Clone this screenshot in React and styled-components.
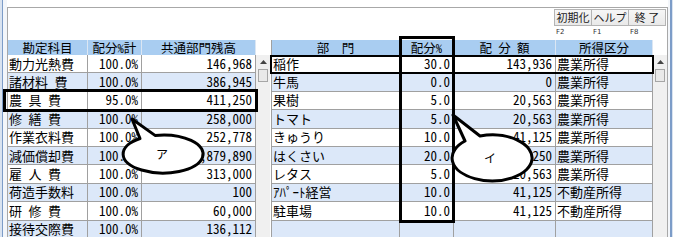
import React from 'react'
import styled, { createGlobalStyle } from 'styled-components'

const GlobalStyle = createGlobalStyle`
  html, body { margin: 0; padding: 0; background: #fff; }
  body { font-family: "Noto Sans CJK JP", "Noto Sans", sans-serif; color: #000; }
`

const leftRows = [
  ['動力光熱費', '100.0%', '146,968'],
  ['諸材料　費', '100.0%', '386,945'],
  ['農　具　費', '95.0%', '411,250'],
  ['修　繕　費', '100.0%', '258,000'],
  ['作業衣料費', '100.0%', '252,778'],
  ['減価償却費', '100.0%', '1,879,890'],
  ['雇　人　費', '100.0%', '313,000'],
  ['荷造手数料', '100.0%', '100'],
  ['研　修　費', '100.0%', '60,000'],
  ['接待交際費', '100.0%', '136,112'],
]

const rightRows = [
  ['稲作', '30.0', '143,936', '農業所得'],
  ['牛馬', '0.0', '0', '農業所得'],
  ['果樹', '5.0', '20,563', '農業所得'],
  ['トマト', '5.0', '20,563', '農業所得'],
  ['きゅうり', '10.0', '41,125', '農業所得'],
  ['はくさい', '20.0', '82,250', '農業所得'],
  ['レタス', '5.0', '20,563', '農業所得'],
  ['ｱﾊﾟｰﾄ経営', '10.0', '41,125', '不動産所得'],
  ['駐車場', '10.0', '41,125', '不動産所得'],
  ['', '', '', ''],
]

const keys = [
  { label: '初期化', fkey: 'F2' },
  { label: 'ヘルプ', fkey: 'F1' },
  { label: '終 了', fkey: 'F8' },
]

const Screen = styled.div`
  position: relative;
  width: 680px;
  height: 237px;
  overflow: hidden;
  display: flex;
  background: #fff;
`

const Edge = styled.div`
  flex: none;
  width: ${p => p.$w}px;
  background: ${p => p.$bg};
`

const Panel = styled.div`
  flex: none;
  width: 661px;
  margin-top: 7px;
  box-sizing: border-box;
  border: 1px solid #a8a8a8;
  border-bottom: none;
  display: flex;
  flex-direction: column;
  background: #fff;
`

const Toolbar = styled.div`
  height: 32px;
  flex: none;
  display: flex;
  justify-content: flex-end;
  padding: 1px 1px 0 0;
  box-sizing: border-box;
`

const Key = styled.div`
  width: 38px;
  display: flex;
  flex-direction: column;
  & + & { margin-left: -1px; }
`

const KeyButton = styled.div`
  height: 17px;
  box-sizing: border-box;
  border: 1px solid #b4b4b4;
  background: linear-gradient(#f6f6f6, #e9e9e9);
  font-size: 11px;
  line-height: 15px;
  text-align: center;
  white-space: pre;
  color: #222;
`

const FKey = styled.div`
  font-family: "DejaVu Sans", sans-serif;
  font-size: 7px;
  line-height: 9px;
  margin-top: 2px;
  padding-left: 2px;
  color: #333;
`

const Tables = styled.div`
  flex: 1;
  display: flex;
`

const Table = styled.div`
  flex: none;
  display: grid;
  grid-template-columns: ${p => p.$cols};
  grid-template-rows: 15px;
  grid-auto-rows: 18.4px;
  align-content: start;
  border-left: ${p => (p.$edge ? '1px solid #a0a0a0' : 'none')};
  font-size: 13px;
  font-feature-settings: "hwid";
`

const HeadCell = styled.div`
  background: #a9cdf1;
  border-right: 1px solid #dbe6f3;
  box-sizing: border-box;
  height: 15px;
  display: flex;
  align-items: center;
  justify-content: center;
  font-size: 12.5px;
  line-height: 13px;
  white-space: pre;
`

const Cell = styled.div`
  background: ${p => (p.$alt ? '#dce8f9' : '#fff')};
  border-right: 1px solid #a0a0a0;
  border-bottom: 1px solid #a0a0a0;
  box-sizing: border-box;
  display: flex;
  align-items: center;
  justify-content: ${p => (p.$num ? 'flex-end' : 'flex-start')};
  line-height: 14px;
  padding: 0 ${p => (p.$num ? '3px' : '1px')};
  white-space: pre;
  overflow: hidden;
`

const ScrollTrack = styled.div`
  flex: none;
  width: 14px;
  display: flex;
  flex-direction: column;
  align-items: center;
  background: linear-gradient(#fff 0 15px, #f0f0f0 15px);
  padding-top: 15px;
  box-sizing: border-box;
`

const ArrowUp = styled.div`
  height: 14px;
  display: flex;
  align-items: center;
  justify-content: center;
`

const Thumb = styled.div`
  width: 10px;
  height: 13px;
  box-sizing: border-box;
  border: 1px solid #a6a6a6;
  background: #e9e9e9;
`

const Gap = styled.div`
  flex: none;
  width: 1px;
`

const Mark = styled.div`
  position: absolute;
  left: ${p => p.$x}px;
  top: ${p => p.$y}px;
  width: ${p => p.$w}px;
  height: ${p => p.$h}px;
  box-sizing: border-box;
  border: ${p => p.$t}px solid #000;
  pointer-events: none;
`

const Callouts = styled.svg`
  position: absolute;
  left: 0;
  top: 0;
  pointer-events: none;
`

function Scroll() {
  return (
    <ScrollTrack>
      <ArrowUp>
        <svg width="7" height="4" viewBox="0 0 7 4">
          <polygon points="3.5,0 7,4 0,4" fill="#444" />
        </svg>
      </ArrowUp>
      <Thumb />
    </ScrollTrack>
  )
}

export default function App() {
  return (
    <Screen>
      <GlobalStyle />
      <Edge
        $w={7}
        $bg="linear-gradient(to right, #d9e3f0 0 2px, #7c9cc8 2px 3px, #f3f6fa 3px 7px)"
      />
      <Panel>
        <Toolbar>
          {keys.map(k => (
            <Key key={k.fkey}>
              <KeyButton>{k.label}</KeyButton>
              <FKey>{k.fkey}</FKey>
            </Key>
          ))}
        </Toolbar>
        <Tables>
          <Table $cols="80px 54px 114px">
            <HeadCell>勘定科目</HeadCell>
            <HeadCell>配分%計</HeadCell>
            <HeadCell>共通部門残高</HeadCell>
            {leftRows.map((r, i) => (
              <React.Fragment key={i}>
                <Cell $alt={i % 2 === 1}>{r[0]}</Cell>
                <Cell $alt={i % 2 === 1} $num>{r[1]}</Cell>
                <Cell $alt={i % 2 === 1} $num>{r[2]}</Cell>
              </React.Fragment>
            ))}
          </Table>
          <Scroll />
          <Gap />
          <Table $cols="128px 54px 102px 97px" $edge>
            <HeadCell>部　　門</HeadCell>
            <HeadCell>配分%</HeadCell>
            <HeadCell>配 分 額</HeadCell>
            <HeadCell>所得区分</HeadCell>
            {rightRows.map((r, i) => (
              <React.Fragment key={i}>
                <Cell $alt={i % 2 === 1}>{r[0]}</Cell>
                <Cell $alt={i % 2 === 1} $num>{r[1]}</Cell>
                <Cell $alt={i % 2 === 1} $num>{r[2]}</Cell>
                <Cell $alt={i % 2 === 1}>{r[3]}</Cell>
              </React.Fragment>
            ))}
          </Table>
          <Scroll />
        </Tables>
      </Panel>
      <Edge
        $w={12}
        $bg="linear-gradient(to right, #f3f6fa 0 2px, #7c9cc8 2px 4px, #d9e3f0 4px 5px, #fff 5px)"
      />

      <Mark $x={3} $y={89} $w={255} $h={23} $t={3} />
      <Mark $x={270} $y={55} $w={384} $h={19} $t={2} />
      <Mark $x={399} $y={36} $w={56} $h={187} $t={3} />

      <Callouts width="680" height="237" viewBox="0 0 680 237">
        <path
          d="M155 135.4 L132 119 L140 138.5 A40 19 0 1 0 155 135.4 Z"
          fill="#fff"
          stroke="#000"
          strokeWidth="3"
          strokeLinejoin="round"
        />
        <text x="162" y="159" fontSize="12" textAnchor="middle" fontFamily="Noto Sans CJK JP, sans-serif">ア</text>
        <path
          d="M480 136 L453 115 L465 141 A40 23 0 1 0 480 136 Z"
          fill="#fff"
          stroke="#000"
          strokeWidth="3"
          strokeLinejoin="round"
        />
        <text x="490" y="163" fontSize="12" textAnchor="middle" fontFamily="Noto Sans CJK JP, sans-serif">イ</text>
      </Callouts>
    </Screen>
  )
}
